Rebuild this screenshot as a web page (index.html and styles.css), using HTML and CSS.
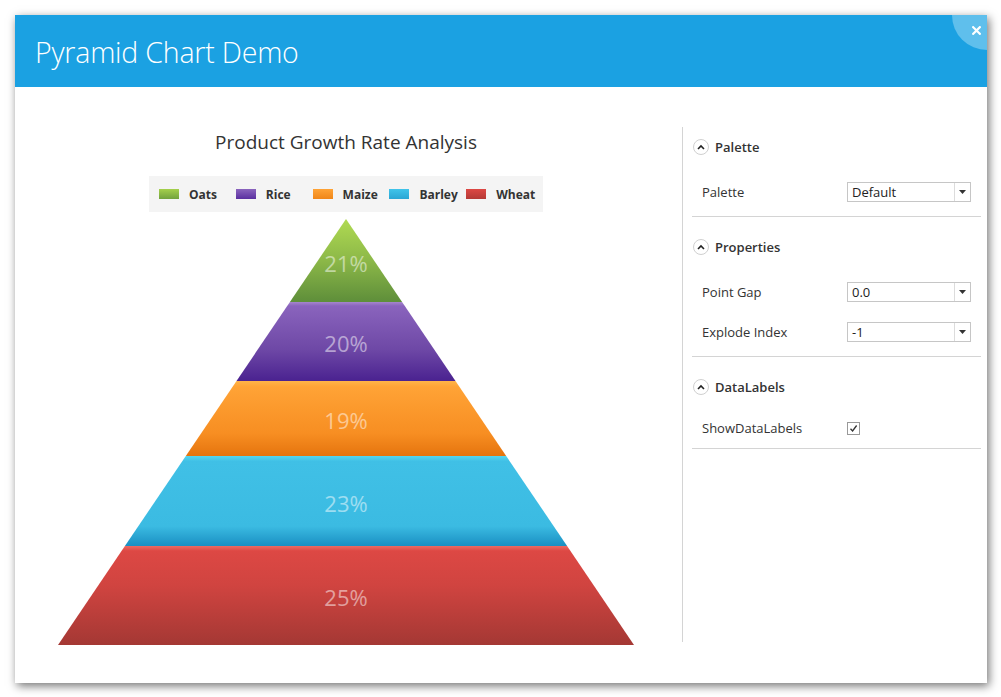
FILE: index.html
```html
<!DOCTYPE html>
<html>
<head>
<meta charset="utf-8">
<link rel="stylesheet" href="styles.css">
</head>
<body>
<div class="window">
  <div class="header">
    <h1 class="title">Pyramid Chart Demo</h1>
    <div class="close"><svg class="close-x" width="9" height="9" viewBox="0 0 9 9"><path d="M1.2 1.2 L7.8 7.8 M7.8 1.2 L1.2 7.8" stroke="#fff" stroke-width="2.2" stroke-linecap="square"/></svg></div>
  </div>
  <div class="content">
    <div class="chart">
      <div class="chart-title">Product Growth Rate Analysis</div>
      <div class="legend">
        <div class="legend-item"><span class="swatch sw-oats"></span>Oats</div>
        <div class="legend-item"><span class="swatch sw-rice"></span>Rice</div>
        <div class="legend-item"><span class="swatch sw-maize"></span>Maize</div>
        <div class="legend-item"><span class="swatch sw-barley"></span>Barley</div>
        <div class="legend-item"><span class="swatch sw-wheat"></span>Wheat</div>
      </div>
      <svg class="pyramid" width="662" height="426" viewBox="0 0 662 426">
        <defs>
          <linearGradient id="gOats" x1="0" y1="0" x2="0" y2="1">
            <stop offset="0" stop-color="#b0da52"/>
            <stop offset="0.5" stop-color="#8cb848"/>
            <stop offset="1" stop-color="#5e8e3a"/>
          </linearGradient>
          <linearGradient id="gRice" x1="0" y1="0" x2="0" y2="1">
            <stop offset="0" stop-color="#a586cc"/>
            <stop offset="0.05" stop-color="#8a64bd"/>
            <stop offset="0.6" stop-color="#6e48a6"/>
            <stop offset="1" stop-color="#4a2290"/>
          </linearGradient>
          <linearGradient id="gMaize" x1="0" y1="0" x2="0" y2="1">
            <stop offset="0" stop-color="#ffb448"/>
            <stop offset="0.08" stop-color="#ffa336"/>
            <stop offset="0.7" stop-color="#f78e22"/>
            <stop offset="1" stop-color="#e5740e"/>
          </linearGradient>
          <linearGradient id="gBarley" x1="0" y1="0" x2="0" y2="1">
            <stop offset="0" stop-color="#55d6f0"/>
            <stop offset="0.06" stop-color="#40c0e6"/>
            <stop offset="0.78" stop-color="#3bbbe2"/>
            <stop offset="1" stop-color="#1a8fc2"/>
          </linearGradient>
          <linearGradient id="gWheat" x1="0" y1="0" x2="0" y2="1">
            <stop offset="0" stop-color="#ec6a62"/>
            <stop offset="0.05" stop-color="#dd4844"/>
            <stop offset="0.4" stop-color="#d04440"/>
            <stop offset="1" stop-color="#a43834"/>
          </linearGradient>
        </defs>
        <polygon points="331,0 387.1,83 274.9,83" fill="url(#gOats)"/>
        <polygon points="274.9,83 387.1,83 440.5,162 221.5,162" fill="url(#gRice)"/>
        <polygon points="221.5,162 440.5,162 491.2,237 170.8,237" fill="url(#gMaize)"/>
        <polygon points="170.8,237 491.2,237 552.1,327 109.9,327" fill="url(#gBarley)"/>
        <polygon points="109.9,327 552.1,327 619,426 43,426" fill="url(#gWheat)"/>
        <g class="labels">
          <text x="331" y="44" class="lbl">21%</text>
          <text x="331" y="124" class="lbl">20%</text>
          <text x="331" y="201" class="lbl">19%</text>
          <text x="331" y="284" class="lbl">23%</text>
          <text x="331" y="378" class="lbl">25%</text>
        </g>
      </svg>
    </div>
    <div class="panel">
      <div class="section">
        <div class="sec-head"><span class="chev"><svg width="8" height="6" viewBox="0 0 8 6"><path d="M1 5 L4 2 L7 5" fill="none" stroke="#222" stroke-width="1.6"/></svg></span>Palette</div>
        <div class="row"><span class="row-label">Palette</span><div class="combo"><span class="combo-val">Default</span><span class="combo-btn"><svg width="7" height="4" viewBox="0 0 7 4"><path d="M0 0 L7 0 L3.5 4 Z" fill="#333"/></svg></span></div></div>
      </div>
      <div class="section">
        <div class="sec-head"><span class="chev"><svg width="8" height="6" viewBox="0 0 8 6"><path d="M1 5 L4 2 L7 5" fill="none" stroke="#222" stroke-width="1.6"/></svg></span>Properties</div>
        <div class="row"><span class="row-label">Point Gap</span><div class="combo"><span class="combo-val">0.0</span><span class="combo-btn"><svg width="7" height="4" viewBox="0 0 7 4"><path d="M0 0 L7 0 L3.5 4 Z" fill="#333"/></svg></span></div></div>
        <div class="row row-tight"><span class="row-label">Explode Index</span><div class="combo"><span class="combo-val">-1</span><span class="combo-btn"><svg width="7" height="4" viewBox="0 0 7 4"><path d="M0 0 L7 0 L3.5 4 Z" fill="#333"/></svg></span></div></div>
      </div>
      <div class="section">
        <div class="sec-head"><span class="chev"><svg width="8" height="6" viewBox="0 0 8 6"><path d="M1 5 L4 2 L7 5" fill="none" stroke="#222" stroke-width="1.6"/></svg></span>DataLabels</div>
        <div class="row row-check"><span class="row-label">ShowDataLabels</span><span class="checkbox"><svg width="11" height="11" viewBox="0 0 11 11"><path d="M2.5 5.8 L4.6 8 L8.6 2.5" fill="none" stroke="#333" stroke-width="1.3"/></svg></span></div>
      </div>
    </div>
  </div>
</div>
</body>
</html>
```

FILE: styles.css
```css
html, body {
  margin: 0;
  padding: 0;
  background: #ffffff;
}
body {
  width: 1001px;
  height: 697px;
  overflow: hidden;
  font-family: "Open Sans", "Noto Sans", sans-serif;
  color: #333;
}
.window {
  position: relative;
  margin: 15px 0 0 15px;
  width: 972px;
  height: 668px;
  background: #fff;
  box-shadow: 2px 3px 9px rgba(0, 0, 0, 0.55);
  overflow: hidden;
}
.header {
  height: 72px;
  background: #1ba1e2;
  display: flex;
  align-items: center;
}
.title {
  margin: 0 0 0 20px;
  font-family: "Open Sans", sans-serif;
  font-weight: 300;
  font-size: 28.5px;
  color: #fff;
  letter-spacing: -0.2px;
  line-height: 1;
  padding-top: 2px;
}
.close {
  position: absolute;
  right: -35px;
  top: -35px;
  width: 70px;
  height: 70px;
  border-radius: 50%;
  background: #5fbfec;
}
.close-x {
  position: absolute;
  left: 20px;
  top: 46px;
  display: block;
}
.content {
  display: flex;
}
.chart {
  width: 662px;
  padding-top: 40px;
  display: flex;
  flex-direction: column;
  align-items: center;
}
.chart-title {
  height: 30px;
  line-height: 30px;
  font-size: 19px;
  color: #333;
  letter-spacing: 0;
}
.legend {
  margin-top: 19px;
  width: 394px;
  height: 36px;
  background: #f4f4f4;
  display: flex;
  align-items: center;
  padding-left: 10px;
  box-sizing: border-box;
}
.legend-item {
  display: flex;
  align-items: center;
  font-size: 12px;
  font-weight: 700;
  color: #333;
  width: 77px;
}
.swatch {
  width: 20px;
  height: 10px;
  margin-right: 10px;
}
.sw-oats { background: linear-gradient(#a5d04c, #72a23e); }
.sw-rice { background: linear-gradient(#8a64bd, #5a2fa0); }
.sw-maize { background: linear-gradient(#ffa336, #f08618); }
.sw-barley { background: linear-gradient(#40c4ea, #2aa6d4); }
.sw-wheat { background: linear-gradient(#dd4844, #b43a36); }
.pyramid {
  display: block;
  margin-top: 7px;
}
.lbl {
  font-family: "Open Sans", sans-serif;
  font-size: 22px;
  fill: rgba(255, 255, 255, 0.5);
  text-anchor: middle;
  dominant-baseline: central;
}
.panel {
  margin-left: 5px;
  margin-top: 40px;
  height: 515px;
  width: 304px;
  border-left: 1px solid #d4d4d4;
  padding: 0 5px 0 9px;
  box-sizing: border-box;
}
.section {
  padding-top: 10px;
  padding-bottom: 4px;
  border-bottom: 1px solid #d4d4d4;
}
.section:first-child {
  padding-top: 0;
}
.sec-head {
  height: 40px;
  display: flex;
  align-items: center;
  font-size: 13px;
  font-weight: 600;
  color: #333;
}
.chev {
  width: 16px;
  height: 16px;
  border: 1px solid #d0d0d0;
  border-radius: 50%;
  display: flex;
  align-items: center;
  justify-content: center;
  margin-right: 6px;
  margin-left: 1px;
  box-sizing: border-box;
  background: #fff;
}
.chev svg { display: block; margin-top: -1px; }
.row {
  height: 40px;
  margin-top: 5px;
  display: flex;
  align-items: center;
  padding-left: 10px;
  font-size: 13px;
}
.row-tight { margin-top: 0; }
.row-check { height: 32px; }
.row-label {
  width: 145px;
  color: #333;
}
.combo {
  width: 124px;
  height: 20px;
  border: 1px solid #c6c6c6;
  box-sizing: border-box;
  display: flex;
  align-items: center;
  background: #fff;
}
.combo-val {
  flex: 1;
  padding-left: 4px;
  font-size: 13px;
  color: #222;
}
.combo-btn {
  width: 15px;
  height: 18px;
  border-left: 1px solid #dcdcdc;
  display: flex;
  align-items: center;
  justify-content: center;
}
.combo-btn svg { display: block; }
.checkbox {
  width: 13px;
  height: 13px;
  border: 1px solid #999;
  box-sizing: border-box;
  display: flex;
  align-items: center;
  justify-content: center;
  background: #fff;
}
.checkbox svg { display: block; }
```
